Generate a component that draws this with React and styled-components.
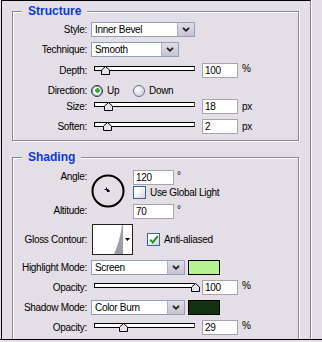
import styled, { createGlobalStyle } from "styled-components";

const GlobalStyle = createGlobalStyle`
  html, body {
    margin: 0;
    padding: 0;
    background: #e4dee6;
  }
  body {
    font-family: "Liberation Sans", Arial, sans-serif;
    font-size: 10px;
    letter-spacing: -0.3px;
    color: #000;
  }
`;

const Window = styled.div`
  width: 322px;
  height: 340px;
  box-sizing: border-box;
  border-bottom: 1px solid #000;
  overflow: hidden;
`;

const Panel = styled.div`
  box-sizing: border-box;
  margin-left: 1px;
  width: 310px;
  height: 100%;
  border-top: 1px solid #000;
  border-left: 1px solid #000;
  border-right: 1px solid #8c8890;
  box-shadow: 1px 0 0 #fff;
  padding: 10px 0 0 10px;
  overflow: hidden;
`;

const Group = styled.div`
  position: relative;
  box-sizing: border-box;
  width: 287px;
  height: ${(p) => p.$h}px;
  margin-top: ${(p) => p.$mt || 0}px;
  border: 1px solid #8c8890;
  box-shadow: inset 1px 1px 0 #fff, 1px 1px 0 #fff;
`;

const Legend = styled.span`
  position: absolute;
  top: -8px;
  left: 9px;
  padding: 0 6px;
  background: #e4dee6;
  color: #0a3ad8;
  font-size: 12px;
  font-weight: bold;
  letter-spacing: 0;
  line-height: 15px;
`;

const Row = styled.div`
  display: grid;
  grid-template-columns: 74px 1fr;
  column-gap: 4px;
  align-items: center;
  height: ${(p) => p.$h || 15}px;
  margin-top: ${(p) => p.$mt}px;
`;

const Label = styled.span`
  text-align: right;
  white-space: nowrap;
  line-height: 14px;
`;

const Controls = styled.div`
  display: flex;
  align-items: center;
  height: 100%;
`;

const SelectBox = styled.div`
  box-sizing: border-box;
  display: flex;
  width: ${(p) => p.$w}px;
  height: 15px;
  border: 1px solid #8ea2bd;
  background: #fff;
`;

const SelectValue = styled.span`
  flex: 1;
  padding-left: 3px;
  line-height: 13px;
`;

const SelectButton = styled.span`
  width: 16px;
  display: flex;
  align-items: center;
  justify-content: center;
  border-left: 1px solid #a9b5c8;
  background: linear-gradient(#e2dee8, #c6c2d0);
`;

const SliderWrap = styled.div`
  position: relative;
  width: 101px;
  height: 9px;
  margin-left: 3px;
`;

const Track = styled.div`
  box-sizing: border-box;
  height: 5px;
  border: 1px solid #000;
  border-right-color: #555;
  background: #fff;
`;

const Thumb = styled.svg`
  position: absolute;
  top: 0;
`;

const NumInput = styled.span`
  box-sizing: border-box;
  display: block;
  width: ${(p) => p.$w || 36}px;
  height: 15px;
  margin-left: ${(p) => p.$ml || 0}px;
  padding-left: 2px;
  border: 1px solid #a6a4ae;
  background: #fff;
  line-height: 13px;
`;

const Unit = styled.span`
  margin-left: ${(p) => p.$ml || 4}px;
  align-self: ${(p) => (p.$top ? "flex-start" : "center")};
  line-height: 12px;
`;

const Option = styled.span`
  display: flex;
  align-items: center;
  gap: 4px;
  width: ${(p) => p.$w || "auto"};
  margin-left: ${(p) => p.$ml || 0}px;
`;

const RadioDot = styled.span`
  box-sizing: border-box;
  width: 12px;
  height: 12px;
  border-radius: 50%;
  display: flex;
  align-items: center;
  justify-content: center;
  border: 1px solid ${(p) => (p.$on ? "#22344c" : "#5e7494")};
  background: ${(p) =>
    p.$on ? "#fff" : "radial-gradient(circle at 35% 35%, #fff, #c6c3d0)"};
  box-shadow: ${(p) => (p.$on ? "inset 0 0 0 1px #8193ab" : "none")};
`;

const CheckBox = styled.span`
  box-sizing: border-box;
  flex: none;
  width: 13px;
  height: 13px;
  display: flex;
  align-items: center;
  justify-content: center;
  border: 1px solid #3a66a0;
  background: linear-gradient(135deg, #fff 30%, #d3d0dc);
`;

const AngleBlock = styled.div`
  display: grid;
  grid-template-columns: 74px 38px auto;
  column-gap: 4px;
  height: 49px;
  margin-top: 12px;
`;

const LabelColumn = styled.div`
  display: flex;
  flex-direction: column;
  justify-content: space-between;
  padding-bottom: 1px;
`;

const Dial = styled.svg`
  margin-top: 4px;
`;

const FieldColumn = styled.div`
  display: flex;
  flex-direction: column;
`;

const FieldLine = styled.div`
  display: flex;
  align-items: center;
  margin-top: ${(p) => p.$mt || 0}px;
`;

const ContourBox = styled.div`
  box-sizing: border-box;
  width: 41px;
  height: 31px;
  margin-left: 1px;
  border: 1px solid #222;
  background: #fff;
  display: flex;
`;

const Swatch = styled.span`
  box-sizing: border-box;
  width: 32px;
  height: 15px;
  margin-left: 3px;
  border: 1px solid #000;
  background: ${(p) => p.$color};
`;

function Chevron() {
  return (
    <svg width="8" height="5" viewBox="0 0 8 5">
      <path d="M1 0.8 L4 3.8 L7 0.8" fill="none" stroke="#1a1a1a" strokeWidth="1.7" />
    </svg>
  );
}

function Select({ value, width }) {
  return (
    <SelectBox $w={width}>
      <SelectValue>{value}</SelectValue>
      <SelectButton>
        <Chevron />
      </SelectButton>
    </SelectBox>
  );
}

function Slider({ pct }) {
  return (
    <SliderWrap>
      <Track />
      <Thumb width="9" height="9" viewBox="0 0 9 9" style={{ left: `calc(${pct}% - 4px)` }}>
        <polygon points="0.5,8.5 0.5,4 4.5,0.5 8.5,4 8.5,8.5" fill="#e6e4ea" stroke="#000" />
      </Thumb>
    </SliderWrap>
  );
}

function SliderRow({ label, pct, value, unit, mt }) {
  return (
    <Row $mt={mt}>
      <Label>{label}</Label>
      <Controls>
        <Slider pct={pct} />
        <NumInput $ml={7}>{value}</NumInput>
        <Unit $top={unit === "%"}>{unit}</Unit>
      </Controls>
    </Row>
  );
}

function Radio({ on, children, width }) {
  return (
    <Option $w={width}>
      <RadioDot $on={on}>
        {on && (
          <svg width="5" height="5" viewBox="0 0 5 5">
            <path d="M1.5 0h2v1.5H5v2H3.5V5h-2V3.5H0v-2h1.5z" fill="#22a022" />
          </svg>
        )}
      </RadioDot>
      {children}
    </Option>
  );
}

function Check({ on }) {
  return (
    <CheckBox>
      {on && (
        <svg width="10" height="9" viewBox="0 0 10 9">
          <path d="M1.2 4.6 L3.8 7.4 L8.8 1.2" fill="none" stroke="#1f9a1f" strokeWidth="2" />
        </svg>
      )}
    </CheckBox>
  );
}

export default function App() {
  return (
    <>
      <GlobalStyle />
      <Window>
        <Panel>
          <Group $h={130}>
            <Legend>Structure</Legend>
            <Row $mt={10}>
              <Label>Style:</Label>
              <Controls>
                <Select value="Inner Bevel" width={104} />
              </Controls>
            </Row>
            <Row $mt={5}>
              <Label>Technique:</Label>
              <Controls>
                <Select value="Smooth" width={88} />
              </Controls>
            </Row>
            <SliderRow label="Depth:" pct={11} value="100" unit="%" mt={6} />
            <Row $mt={5}>
              <Label>Direction:</Label>
              <Controls>
                <Radio on width="42px">Up</Radio>
                <Radio>Down</Radio>
              </Controls>
            </Row>
            <SliderRow label="Size:" pct={14} value="18" unit="px" mt={1} />
            <SliderRow label="Soften:" pct={13} value="2" unit="px" mt={5} />
          </Group>

          <Group $h={220} $mt={16}>
            <Legend>Shading</Legend>
            <AngleBlock>
              <LabelColumn>
                <Label>Angle:</Label>
                <Label>Altitude:</Label>
              </LabelColumn>
              <Dial width="34" height="34" viewBox="0 0 34 34">
                <circle cx="17" cy="17" r="15.5" fill="none" stroke="#000" strokeWidth="2" />
                <path d="M15 13.5h1v3h-1zM13.5 15h4v1h-4z" fill="#000" />
                <rect x="16" y="16" width="2.5" height="2" fill="#000" />
              </Dial>
              <FieldColumn>
                <FieldLine>
                  <NumInput $w={41}>120</NumInput>
                  <Unit $ml={3} $top>°</Unit>
                </FieldLine>
                <FieldLine $mt={1}>
                  <Option>
                    <Check />
                    Use Global Light
                  </Option>
                </FieldLine>
                <FieldLine $mt={5}>
                  <NumInput $w={41}>70</NumInput>
                  <Unit $ml={3} $top>°</Unit>
                </FieldLine>
              </FieldColumn>
            </AngleBlock>

            <Row $h={31} $mt={5}>
              <Label>Gloss Contour:</Label>
              <Controls>
                <ContourBox>
                  <svg width="39" height="29" viewBox="0 0 39 29">
                    <path d="M30 0 L30 29 L21 29 Q27 16 29 0 Z" fill="#9e9ca6" />
                    <polygon points="32,13 37,13 34.5,16" fill="#000" />
                  </svg>
                </ContourBox>
                <Option $ml={14}>
                  <Check on />
                  Anti-aliased
                </Option>
              </Controls>
            </Row>

            <Row $mt={5}>
              <Label>Highlight Mode:</Label>
              <Controls>
                <Select value="Screen" width={94} />
                <Swatch $color="#b6f291" />
              </Controls>
            </Row>
            <SliderRow label="Opacity:" pct={100} value="100" unit="%" mt={5} />
            <Row $mt={5}>
              <Label>Shadow Mode:</Label>
              <Controls>
                <Select value="Color Burn" width={94} />
                <Swatch $color="#123312" />
              </Controls>
            </Row>
            <SliderRow label="Opacity:" pct={29} value="29" unit="%" mt={5} />
          </Group>
        </Panel>
      </Window>
    </>
  );
}
